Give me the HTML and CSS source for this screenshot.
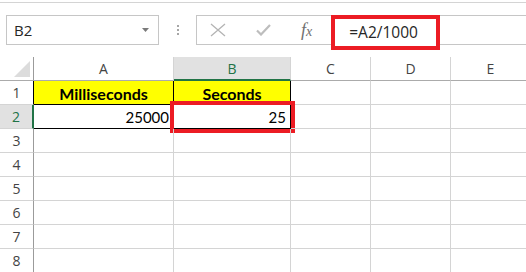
FILE: index.html
```html
<!DOCTYPE html>
<html lang="en">
<head>
    <meta charset="UTF-8">
    <title>Milliseconds to Seconds</title>
    <link rel="stylesheet" href="styles.css">
</head>
<body>
    <div class="ribbon-edge"></div>

    <div class="formula-row">
        <div class="name-box">
            <span>B2</span>
            <svg class="drop" width="7" height="4" viewBox="0 0 7 4"><polygon points="0,0 7,0 3.5,4" fill="#7a7a7a"/></svg>
        </div>
        <div class="grip"><i></i><i></i><i></i></div>
        <div class="formula-bar">
            <svg class="cancel" width="16" height="14" viewBox="0 0 16 14">
                <path d="M1 1 L15 13 M15 1 L1 13" stroke="#b4b4b4" stroke-width="1.3" fill="none"/>
            </svg>
            <svg class="enter" width="15" height="12" viewBox="0 0 15 12">
                <path d="M1 6.5 L5 10.5 L14 1" stroke="#bdbdbd" stroke-width="2.2" fill="none"/>
            </svg>
            <span class="fx">f<small>x</small></span>
            <div class="formula-input">=A2/1000</div>
        </div>
    </div>

    <div class="sheet">
        <div class="hd corner">
            <svg width="16" height="16" viewBox="0 0 16 16"><polygon points="16,0 16,16 0,16" fill="#dcdcdc"/></svg>
        </div>
        <div class="hd col">A</div>
        <div class="hd col active">B</div>
        <div class="hd col">C</div>
        <div class="hd col">D</div>
        <div class="hd col">E</div>

        <div class="hd row">1</div>
        <div class="cell title">Milliseconds</div>
        <div class="cell title">Seconds</div>
        <div class="cell"></div>
        <div class="cell"></div>
        <div class="cell"></div>

        <div class="hd row active">2</div>
        <div class="cell num boxed">25000</div>
        <div class="cell num boxed marked">25</div>
        <div class="cell"></div>
        <div class="cell"></div>
        <div class="cell"></div>

        <div class="hd row">3</div>
        <div class="cell"></div><div class="cell"></div><div class="cell"></div><div class="cell"></div><div class="cell"></div>
        <div class="hd row">4</div>
        <div class="cell"></div><div class="cell"></div><div class="cell"></div><div class="cell"></div><div class="cell"></div>
        <div class="hd row">5</div>
        <div class="cell"></div><div class="cell"></div><div class="cell"></div><div class="cell"></div><div class="cell"></div>
        <div class="hd row">6</div>
        <div class="cell"></div><div class="cell"></div><div class="cell"></div><div class="cell"></div><div class="cell"></div>
        <div class="hd row">7</div>
        <div class="cell"></div><div class="cell"></div><div class="cell"></div><div class="cell"></div><div class="cell"></div>
        <div class="hd row">8</div>
        <div class="cell"></div><div class="cell"></div><div class="cell"></div><div class="cell"></div><div class="cell"></div>
    </div>
</body>
</html>
```

FILE: styles.css
```css
body {
    margin: 0;
    background: #fff;
    font-family: "Open Sans", "Liberation Sans", sans-serif;
    color: #222;
    overflow: hidden;
}

.ribbon-edge {
    height: 2px;
    border-bottom: 1px solid #d4d4d4;
}

.formula-row {
    display: flex;
    height: 30px;
    margin-top: 12px;
    padding-left: 6px;
}

.name-box {
    box-sizing: border-box;
    width: 153px;
    border: 1px solid #c6c6c6;
    display: flex;
    align-items: center;
    justify-content: space-between;
    padding: 0 9px 0 7px;
    font-size: 15px;
    color: #262626;
}

.grip {
    width: 37px;
    display: flex;
    flex-direction: column;
    align-items: center;
    justify-content: center;
    gap: 2px;
}

.grip i {
    width: 2px;
    height: 2px;
    background: #a6a6a6;
}

.formula-bar {
    flex: 1;
    box-sizing: border-box;
    border: 1px solid #c6c6c6;
    border-right: none;
    display: flex;
    align-items: center;
}

.cancel {
    margin-left: 13px;
}

.enter {
    margin-left: 30px;
}

.fx {
    margin-left: 30px;
    font-family: "Liberation Serif", serif;
    font-style: italic;
    font-size: 18px;
    color: #707070;
}

.fx small {
    font-size: 14px;
}

.formula-input {
    box-sizing: border-box;
    width: 109px;
    height: 35px;
    margin-left: 19px;
    margin-top: 4px;
    border: 4px solid #ec1c24;
    padding-left: 14px;
    display: flex;
    align-items: center;
    font-size: 15.5px;
    color: #262626;
    background: #fff;
}

.sheet {
    display: grid;
    grid-template-columns: 34px 140px 117px 80px 80px 80px;
    grid-auto-rows: 24px;
    margin-top: 12px;
}

.sheet > div {
    box-sizing: border-box;
    border-right: 1px solid #d4d4d4;
    border-bottom: 1px solid #d4d4d4;
}

.hd {
    display: flex;
    align-items: center;
    justify-content: center;
    font-size: 14px;
    color: #444;
}

.sheet > .col {
    border-bottom-color: #ababab;
}

.sheet > .row {
    border-right-color: #9b9b9b;
}

.sheet > .corner {
    border-bottom-color: #ababab;
    border-right-color: #9b9b9b;
    justify-content: flex-end;
    align-items: flex-end;
    padding: 0 3px 3px 0;
}

.corner svg {
    display: block;
}

.sheet > .hd.active {
    background: #e1e1e1;
    color: #217346;
}

.sheet > .col.active {
    border-bottom: 2px solid #217346;
}

.sheet > .row.active {
    border-right: 2px solid #217346;
}

.sheet > .row:nth-child(7) {
    border-right-color: #000;
}

.cell {
    font-family: Lato, "Liberation Sans", sans-serif;
    font-size: 15px;
    color: #000;
    display: flex;
    align-items: center;
}

.sheet > .title {
    background: #ffff00;
    font-weight: bold;
    font-size: 16px;
    justify-content: center;
    border-right-color: #000;
    border-bottom-color: #000;
    padding-top: 2px;
}

.sheet > .boxed {
    border-right-color: #000;
    border-bottom-color: #000;
}

.num {
    justify-content: flex-end;
    padding-right: 4px;
}

.marked {
    outline: 4px solid #ec1c24;
}
```
